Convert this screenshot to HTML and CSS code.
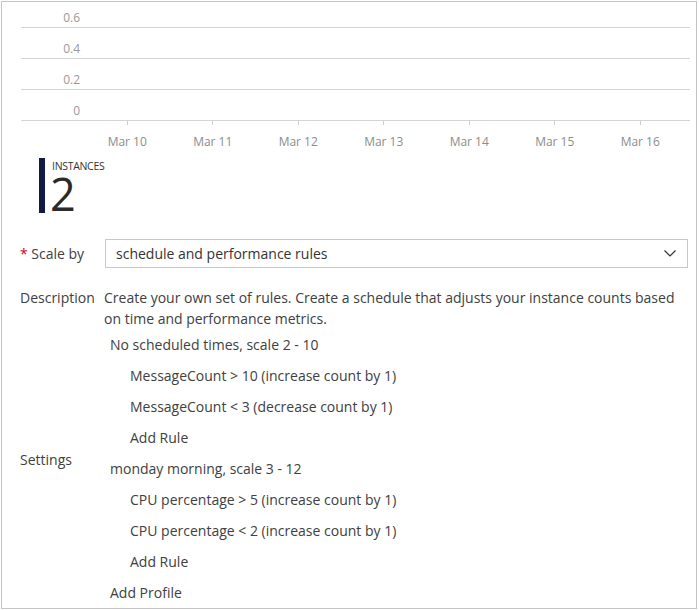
FILE: index.html
```html
<!DOCTYPE html>
<html>
<head>
<meta charset="utf-8">
<link rel="stylesheet" href="styles.css">
</head>
<body>
<div class="panel">
  <div class="chart">
    <div class="grid-row first"><span class="ylab">0.6</span></div>
    <div class="grid-row"><span class="ylab">0.4</span></div>
    <div class="grid-row"><span class="ylab">0.2</span></div>
    <div class="grid-row"><span class="ylab">0</span></div>
    <div class="xaxis">
      <div class="tick"><span class="tick-mark"></span><span class="tick-label">Mar 10</span></div>
      <div class="tick"><span class="tick-mark"></span><span class="tick-label">Mar 11</span></div>
      <div class="tick"><span class="tick-mark"></span><span class="tick-label">Mar 12</span></div>
      <div class="tick"><span class="tick-mark"></span><span class="tick-label">Mar 13</span></div>
      <div class="tick"><span class="tick-mark"></span><span class="tick-label">Mar 14</span></div>
      <div class="tick"><span class="tick-mark"></span><span class="tick-label">Mar 15</span></div>
      <div class="tick"><span class="tick-mark"></span><span class="tick-label">Mar 16</span></div>
    </div>
  </div>

  <div class="instances">
    <div class="inst-bar"></div>
    <div class="inst-text">
      <div class="inst-label">INSTANCES</div>
      <div class="inst-value">2</div>
    </div>
  </div>

  <div class="form-row scale-row">
    <div class="label"><span class="req">*</span> Scale by</div>
    <div class="select">
      <span class="select-text">schedule and performance rules</span>
      <svg class="chevron" width="12" height="7" viewBox="0 0 12 7"><path d="M0.5 0.5 L6 6 L11.5 0.5" fill="none" stroke="#333" stroke-width="1.2"/></svg>
    </div>
  </div>

  <div class="form-row desc-row">
    <div class="label">Description</div>
    <div class="desc">Create your own set of rules. Create a schedule that adjusts your instance counts based on time and performance metrics.</div>
  </div>

  <div class="form-row settings-row">
    <div class="label settings-label">Settings</div>
    <ul class="settings">
      <li class="profile">No scheduled times, scale 2 - 10</li>
      <li class="rule">MessageCount &gt; 10 (increase count by 1)</li>
      <li class="rule">MessageCount &lt; 3 (decrease count by 1)</li>
      <li class="rule">Add Rule</li>
      <li class="profile">monday morning, scale 3 - 12</li>
      <li class="rule">CPU percentage &gt; 5 (increase count by 1)</li>
      <li class="rule">CPU percentage &lt; 2 (increase count by 1)</li>
      <li class="rule">Add Rule</li>
      <li class="profile">Add Profile</li>
    </ul>
  </div>
</div>
</body>
</html>
```

FILE: styles.css
```css
* { box-sizing: border-box; }
html, body { margin: 0; padding: 0; background: #fff; }
body {
  font-family: "Open Sans", "Noto Sans", sans-serif;
  color: #404040;
  font-size: 13.5px;
}
.panel {
  margin: 1px 0 0 1px;
  width: 696px;
  height: 608px;
  border: 1px solid #c4c4c4;
  overflow: hidden;
}
.chart {
  margin: 0 6px 0 19px;
}
.grid-row {
  height: 31px;
  border-bottom: 1px solid #d4d4d4;
  display: flex;
  align-items: flex-end;
}
.grid-row.first { height: 26px; }
.ylab {
  width: 59px;
  text-align: right;
  font-size: 12px;
  line-height: 14px;
  color: #9a9a9a;
  padding-bottom: 2px;
}
.xaxis {
  display: flex;
  padding-left: 63.5px;
}
.tick {
  width: 85.5px;
  display: flex;
  flex-direction: column;
  align-items: center;
}
.tick-mark {
  width: 1px;
  height: 4px;
  background: #cfcfcf;
}
.tick-label {
  margin-top: 9px;
  font-size: 12px;
  line-height: 16px;
  color: #8c8c8c;
}
.instances {
  display: flex;
  height: 55px;
  margin: 8px 0 0 37px;
}
.inst-bar {
  width: 6px;
  height: 55px;
  background: #111a45;
}
.inst-text {
  margin-left: 7px;
}
.inst-label {
  font-size: 10.5px;
  line-height: 12px;
  margin-top: 2px;
  color: #333;
  letter-spacing: -0.3px;
}
.inst-value {
  font-size: 45px;
  line-height: 40px;
  margin-top: 2px;
  color: #2a2a2a;
  margin-left: -2px;
}
.form-row {
  display: flex;
  padding-left: 18px;
}
.label {
  width: 84px;
  flex: none;
  font-size: 14px;
}
.scale-row {
  margin-top: 26px;
  align-items: center;
}
.req { color: #d0021b; }
.select {
  margin-left: 1px;
  width: 583px;
  height: 29px;
  border: 1px solid #c8c8c8;
  display: flex;
  align-items: center;
  justify-content: space-between;
  padding: 0 11px 0 10px;
}
.select-text { font-size: 14px; color: #333; }
.desc-row {
  margin-top: 19px;
}
.desc-row .label { line-height: 21px; }
.desc {
  width: 584px;
  line-height: 21px;
  font-size: 14px;
}
.settings-row {
  align-items: center;
  margin-top: 0;
}
.settings-label { margin-top: -18px; }
.settings {
  list-style: none;
  margin: 0;
  padding: 0;
}
.settings li {
  height: 31px;
  line-height: 31px;
  font-size: 14px;
}
.profile { padding-left: 6px; }
.rule { padding-left: 26px; }
```
